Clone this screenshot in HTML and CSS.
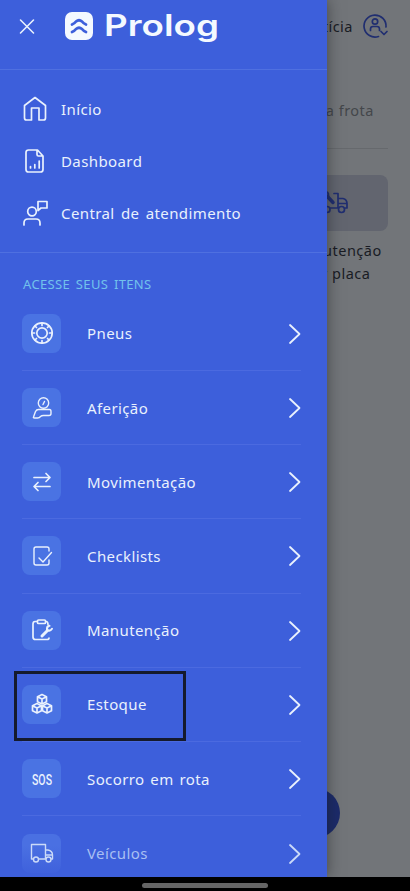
FILE: index.html
```html
<!DOCTYPE html>
<html lang="pt-BR">
<head>
<meta charset="utf-8">
<title>Prolog</title>
<link rel="stylesheet" href="styles.css">
</head>
<body>
<div class="phone">
  <main class="page">
    <header class="account">
      <span>Letícia</span>
      <svg width="26" height="26" viewBox="0 0 26 26"><path d="M24 14A11 11 0 1 0 16.500 23.500M19 18.500l3 3 3-3M8.500 17.500v-1.500q0-2.500 2.500-2.500h4q2.500 0 2.500 2.500v1.500"/><circle cx="13" cy="8.500" r="2.700"/></svg>
    </header>
    <p class="fleet">Gestão da frota</p>
    <section class="shortcut">
      <div class="shortcut-card">
        <svg width="34" height="26" viewBox="0 0 34 26"><path d="M1 18h7M14 18h8M22 18V3.500h-4M22 8.500h5q4 1 4 5V18h-2M22 13.500h9"/><circle cx="11" cy="19.500" r="3"/><circle cx="25.500" cy="19.500" r="3"/><path class="thick" d="M11 6l6 6.500"/><path d="M8 2q5-1 4.500 4-1 3-5 2"/></svg>
      </div>
      <p>Manutenção<br>por placa</p>
    </section>
    <button class="fab" aria-label="Novo"></button>
  </main>
  <aside class="drawer">
    <header class="top">
      <svg class="close" width="16" height="16" viewBox="0 0 16 16"><path d="M1.500 1l13 13M14.500 1l-13 13"/></svg>
      <svg class="mark" width="28" height="28" viewBox="0 0 28 28"><rect width="28" height="28" rx="7"/><path d="M7 12.500q2.500-1 4-3 3-2.500 6 0 1.500 2 4 3M7 20q2.500-1 4-3 3-2.500 6 0 1.500 2 4 3"/></svg>
      <svg class="word" width="115" height="44" viewBox="0 0 115 44"><text x="-1" y="29" textLength="115" lengthAdjust="spacingAndGlyphs">Prolog</text></svg>
    </header>
    <nav class="main-links">
      <a><svg width="26" height="26" viewBox="0 0 26 26"><path d="M2.500 9.500 13 1.500 23.500 9.500V22q0 2-2 2H17V12H9.500v12H4.500q-2 0-2-2z"/></svg>Início</a>
      <a><svg width="26" height="26" viewBox="0 0 26 26"><path d="M15.500 2H6.500Q4 2 4 4.500v17Q4 24 6.500 24h12q2.500 0 2.500-2.500V8zM15 2v4.500Q15 8 16.500 8H21M8.500 18.500V20M12.800 16.500V20M17.200 13v7"/></svg>Dashboard</a>
      <a><svg width="26" height="26" viewBox="0 0 26 26"><circle cx="10" cy="11.500" r="4.300"/><path d="M2 25v-2q0-4 4-4h8q4 0 4 4v2M16 1.500h9V8h-6l-3 2.500z"/></svg>Central de atendimento</a>
    </nav>
    <h2>ACESSE SEUS ITENS</h2>
    <nav class="items">
      <a><i><svg width="24" height="24" viewBox="0 0 24 24"><circle cx="12" cy="12" r="10.200"/><circle cx="12" cy="12" r="5.200"/><path d="M12 2v2.500M12 19.500V22M2 12h2.500M19.500 12H22M5 5l1.500 1.500M17.500 17.500L19 19M19 5l-1.500 1.500M6.500 17.500L5 19"/></svg></i><span>Pneus</span><svg class="chev" width="12" height="20" viewBox="0 0 12 20"><path d="M1 1l9.500 9L1 19"/></svg></a>
      <a><i><svg class="thin" width="24" height="24" viewBox="0 0 24 24"><circle cx="13.500" cy="7" r="5.200"/><path d="M13 8.500l1.500-3M3.500 21l2-5.500q1-2 3-2h11q1.500 0 1.500 2v2q0 2-2 2h-5.500q-2 0-3 1-1 1.500-3 1.500H4.500q-1.500 0-1-1z"/></svg></i><span>Aferição</span><svg class="chev" width="12" height="20" viewBox="0 0 12 20"><path d="M1 1l9.500 9L1 19"/></svg></a>
      <a><i><svg width="24" height="24" viewBox="0 0 24 24"><path d="M4 7.500h15.500M16 3.500l4 4-4 4M20 16.500H4.500M8 12.500l-4 4 4 4"/></svg></i><span>Movimentação</span><svg class="chev" width="12" height="20" viewBox="0 0 12 20"><path d="M1 1l9.500 9L1 19"/></svg></a>
      <a><i><svg class="thin" width="24" height="24" viewBox="0 0 24 24"><path d="M19 7V5q0-2-2-2H6Q4 3 4 5v14q0 2 2 2h11q2 0 2-2v-3M9 14l4 4 8.500-9.500"/></svg></i><span>Checklists</span><svg class="chev" width="12" height="20" viewBox="0 0 12 20"><path d="M1 1l9.500 9L1 19"/></svg></a>
      <a><i><svg width="24" height="24" viewBox="0 0 24 24"><path d="M7 3.500H5Q3 3.500 3 6v13q0 2.500 2.500 2.500H17q2 0 2-1.500M16 3.500q2 0 2 3"/><rect x="7.500" y="2" width="8" height="3.500" rx="1"/><path class="wrench" d="M12 18l5.500-5.500"/><path class="jaw" d="M19.500 7.800q-3 .5-2.500 4 3 2 5-1"/></svg></i><span>Manutenção</span><svg class="chev" width="12" height="20" viewBox="0 0 12 20"><path d="M1 1l9.500 9L1 19"/></svg></a>
      <a class="marked"><i><svg width="24" height="24" viewBox="0 0 24 24"><path id="cube" d="M12 2.500l4.500 2.200v5L12 12 7.500 9.700v-5zM8 5l4 2 4-2M12 7v5"/><use href="#cube" x="-5" y="9"/><use href="#cube" x="5" y="9"/></svg></i><span>Estoque</span><svg class="chev" width="12" height="20" viewBox="0 0 12 20"><path d="M1 1l9.500 9L1 19"/></svg></a>
      <a><i><svg width="24" height="24" viewBox="0 0 24 24"><text class="sos" x="2" y="17.500" textLength="20" lengthAdjust="spacingAndGlyphs">SOS</text></svg></i><span>Socorro em rota</span><svg class="chev" width="12" height="20" viewBox="0 0 12 20"><path d="M1 1l9.500 9L1 19"/></svg></a>
      <a class="fading"><i><svg class="thin" width="24" height="24" viewBox="0 0 24 24"><path d="M3.500 18H1.500V3.500h14V18H8.500M15.500 9h2.500q4.500 1 4.500 5v4h-1.500M15.500 14h7"/><circle cx="6" cy="18.500" r="2.500"/><circle cx="18.500" cy="18.500" r="2.500"/></svg></i><span>Veículos</span><svg class="chev" width="12" height="20" viewBox="0 0 12 20"><path d="M1 1l9.500 9L1 19"/></svg></a>
    </nav>
  </aside>
  <footer class="gesture"><div></div></footer>
</div>
</body>
</html>
```
FILE: styles.css
```css
*, *::after { box-sizing: border-box; }
body { margin: 0; font-family: "Noto Sans", sans-serif; }
p, h2 { margin: 0; }
.phone { position: relative; display: flex; flex-direction: column; width: 410px; height: 891px; overflow: hidden; background: #727579; }
svg { display: block; flex: none; fill: none; stroke: currentColor; stroke-width: 1.7; stroke-linecap: round; stroke-linejoin: round; overflow: visible; }
svg text { stroke: none; fill: currentColor; }
.page { position: relative; height: 877px; padding: 13px 22px 0; color: #191c24; font-size: 14.5px; letter-spacing: .5px; }
.account { display: flex; align-items: center; justify-content: flex-end; gap: 9px; height: 26px; }
.account svg { color: #202e70; }
.fleet { height: 79px; margin-top: 31px; padding: 28px 14px 0 0; text-align: right; color: #44474b; line-height: 24px; border-bottom: 1px solid #66696d; }
.shortcut { display: flex; flex-direction: column; align-items: center; width: 116px; margin: 26px 0 0 auto; }
.shortcut-card { display: flex; align-items: center; justify-content: center; width: 116px; height: 56px; border-radius: 8px; background: #62656f; color: #202e70; }
.shortcut-card svg { margin-left: 5px; }
.thick { stroke-width: 3.5; }
.shortcut p { width: 116px; margin-top: 8px; padding-left: 13px; text-align: center; line-height: 22.5px; }
.fab { position: absolute; left: 290px; top: 788px; width: 50px; height: 50px; border: 0; border-radius: 50%; background: #1c2b6a; }
.drawer { position: absolute; left: 0; top: 0; width: 327px; height: 877px; overflow: hidden; background: #3d5fdb; color: #e9f1fd; box-shadow: 0 0 14px rgba(20, 22, 26, .5); clip-path: inset(0 -24px 0 0); }
.top { display: flex; height: 70px; padding: 0 0 0 19px; border-bottom: 1px solid #4f70e0; }
.close { margin-top: 19px; stroke-width: 1.6; }
.mark { margin: 12px 0 0 30px; color: #3d5fdb; stroke-width: 2.8; }
.mark rect { fill: #f4f9ff; stroke: none; }
.word { margin: 7px 0 0 12px; color: #f4f9ff; }
.word text { font: 600 29.5px Inter, sans-serif; }
.main-links { height: 183px; padding: 13px 22px 0; border-bottom: 1px solid #4f70e0; }
.main-links a { display: flex; align-items: center; gap: 13px; height: 52.2px; font-size: 15px; letter-spacing: .4px; word-spacing: 2px; }
h2 { height: 43.8px; padding: 20px 23px 0; color: #72c2ec; font-size: 13px; line-height: 22px; font-weight: 400; letter-spacing: .35px; word-spacing: 2px; }
.items { padding: 0 26px 0 22px; }
.items a { position: relative; display: flex; align-items: center; height: 74.2px; border-bottom: 1px solid #4b6ae0; font-size: 15px; letter-spacing: .4px; word-spacing: 1.5px; }
.items i { display: flex; align-items: center; justify-content: center; width: 39px; height: 39px; margin-right: 26px; border-radius: 8px; background: #4a73e3; }
.items .chev { margin: 1px 0 0 auto; stroke-width: 1.8; }
.items .thin { stroke-width: 1.4; }
.items .wrench { stroke-width: 3; }
.items .jaw { stroke-width: 2; }
.sos { font: 500 15px Roboto, sans-serif; letter-spacing: 0; word-spacing: 0; }
.marked::after { content: ""; position: absolute; left: -8px; top: 3px; width: 172px; height: 70px; border: 3px solid #151a2c; }
.items .fading { border: 0; color: #a9bff2; }
.fading i { background: linear-gradient(#4a70e2 30%, #3f61dc); }
.fading .chev, .fading i svg { color: #cbdaf8; }
.gesture { display: flex; align-items: center; justify-content: center; height: 14px; background: #000; }
.gesture div { width: 126px; height: 5px; margin-top: 2px; border-radius: 3px; background: #656565; }
```
